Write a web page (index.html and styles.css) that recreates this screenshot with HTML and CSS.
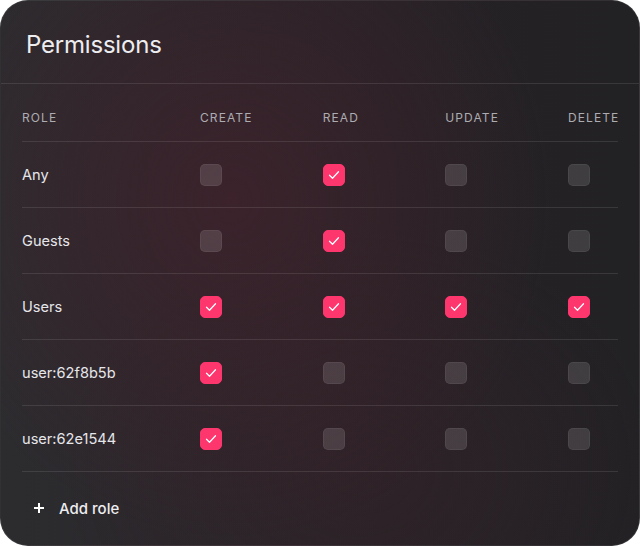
FILE: index.html
```html
<!DOCTYPE html>
<html lang="en">
<head>
<meta charset="utf-8">
<title>Permissions</title>
<link rel="stylesheet" href="styles.css">
</head>
<body>
<div class="card">
  <header class="card-header">
    <h1 class="title">Permissions</h1>
  </header>
  <div class="table">
    <div class="row head">
      <div class="cell">ROLE</div>
      <div class="cell">CREATE</div>
      <div class="cell">READ</div>
      <div class="cell">UPDATE</div>
      <div class="cell">DELETE</div>
    </div>
    <div class="row">
      <div class="cell role">Any</div>
      <div class="cell"><span class="box"></span></div>
      <div class="cell"><span class="box on"><svg viewBox="0 0 22 22"><path d="M6.5 11.3l3 3 6-6.6"/></svg></span></div>
      <div class="cell"><span class="box"></span></div>
      <div class="cell"><span class="box"></span></div>
    </div>
    <div class="row">
      <div class="cell role">Guests</div>
      <div class="cell"><span class="box"></span></div>
      <div class="cell"><span class="box on"><svg viewBox="0 0 22 22"><path d="M6.5 11.3l3 3 6-6.6"/></svg></span></div>
      <div class="cell"><span class="box"></span></div>
      <div class="cell"><span class="box"></span></div>
    </div>
    <div class="row">
      <div class="cell role">Users</div>
      <div class="cell"><span class="box on"><svg viewBox="0 0 22 22"><path d="M6.5 11.3l3 3 6-6.6"/></svg></span></div>
      <div class="cell"><span class="box on"><svg viewBox="0 0 22 22"><path d="M6.5 11.3l3 3 6-6.6"/></svg></span></div>
      <div class="cell"><span class="box on"><svg viewBox="0 0 22 22"><path d="M6.5 11.3l3 3 6-6.6"/></svg></span></div>
      <div class="cell"><span class="box on"><svg viewBox="0 0 22 22"><path d="M6.5 11.3l3 3 6-6.6"/></svg></span></div>
    </div>
    <div class="row">
      <div class="cell role">user:62f8b5b</div>
      <div class="cell"><span class="box on"><svg viewBox="0 0 22 22"><path d="M6.5 11.3l3 3 6-6.6"/></svg></span></div>
      <div class="cell"><span class="box"></span></div>
      <div class="cell"><span class="box"></span></div>
      <div class="cell"><span class="box"></span></div>
    </div>
    <div class="row">
      <div class="cell role">user:62e1544</div>
      <div class="cell"><span class="box on"><svg viewBox="0 0 22 22"><path d="M6.5 11.3l3 3 6-6.6"/></svg></span></div>
      <div class="cell"><span class="box"></span></div>
      <div class="cell"><span class="box"></span></div>
      <div class="cell"><span class="box"></span></div>
    </div>
  </div>
  <div class="footer">
    <button class="add">
      <svg class="plus" viewBox="0 0 12 12"><path d="M6 1v10M1 6h10"/></svg>
      <span>Add role</span>
    </button>
  </div>
</div>
</body>
</html>
```
FILE: styles.css
```css
html, body {
  margin: 0;
  padding: 0;
  background: #ffffff;
}
body {
  font-family: Inter, "Noto Sans", sans-serif;
  width: 640px;
  height: 546px;
  overflow: hidden;
}
.card {
  box-sizing: border-box;
  width: 640px;
  height: 546px;
  border-radius: 28px;
  border: 1px solid rgba(255, 255, 255, 0.07);
  overflow: hidden;
  background:
    radial-gradient(ellipse 320px 340px at 230px 200px, rgba(64, 34, 44, 0.8), rgba(64, 34, 44, 0) 100%),
    radial-gradient(ellipse 300px 240px at 360px 470px, rgba(56, 34, 42, 0.45), rgba(56, 34, 42, 0) 100%),
    linear-gradient(90deg, #2c2c2f 0%, #2a272b 25%, #262226 60%, #222124 100%);
  color: #ededf0;
}
.card-header {
  height: 82px;
  border-bottom: 1px solid rgba(255, 255, 255, 0.1);
  padding: 0 25px;
  display: flex;
  align-items: center;
}
.title {
  margin: 0;
  font-size: 24px;
  font-weight: 400;
  letter-spacing: -0.2px;
  color: #ededf0;
  padding-top: 4px;
}
.table {
  padding: 0 21px;
}
.row {
  display: grid;
  grid-template-columns: 178px repeat(3, 1fr) 50px;
  align-items: center;
  height: 65px;
  border-bottom: 1px solid rgba(255, 255, 255, 0.1);
}
.row.head {
  height: 58px;
  align-items: end;
  box-sizing: border-box;
  padding-bottom: 15px;
}
.head .cell {
  font-size: 12px;
  line-height: 16px;
  letter-spacing: 1.1px;
  color: #adacb1;
}
.role {
  font-size: 14.6px;
  color: #e6e6ea;
}
.box {
  display: block;
  width: 22px;
  height: 22px;
  box-sizing: border-box;
  border-radius: 5px;
  background: rgba(255, 255, 255, 0.13);
  border: 1px solid rgba(255, 255, 255, 0.05);
}
.box.on {
  background: #fd366e;
  border-color: #fd366e;
}
.box svg {
  display: block;
  width: 22px;
  height: 22px;
  margin: -1px;
  fill: none;
  stroke: #ffffff;
  stroke-width: 1.3;
  stroke-linecap: round;
  stroke-linejoin: round;
}
.footer {
  padding: 0 21px;
  height: 72px;
  display: flex;
  align-items: center;
}
.add {
  display: flex;
  align-items: center;
  gap: 14px;
  background: none;
  border: 0;
  padding: 0 0 0 11px;
  font-family: inherit;
  font-size: 15px;
  font-weight: 500;
  color: #ededf0;
  cursor: pointer;
}
.plus {
  width: 12px;
  height: 12px;
  fill: none;
  stroke: #ffffff;
  stroke-width: 2;
}
```
